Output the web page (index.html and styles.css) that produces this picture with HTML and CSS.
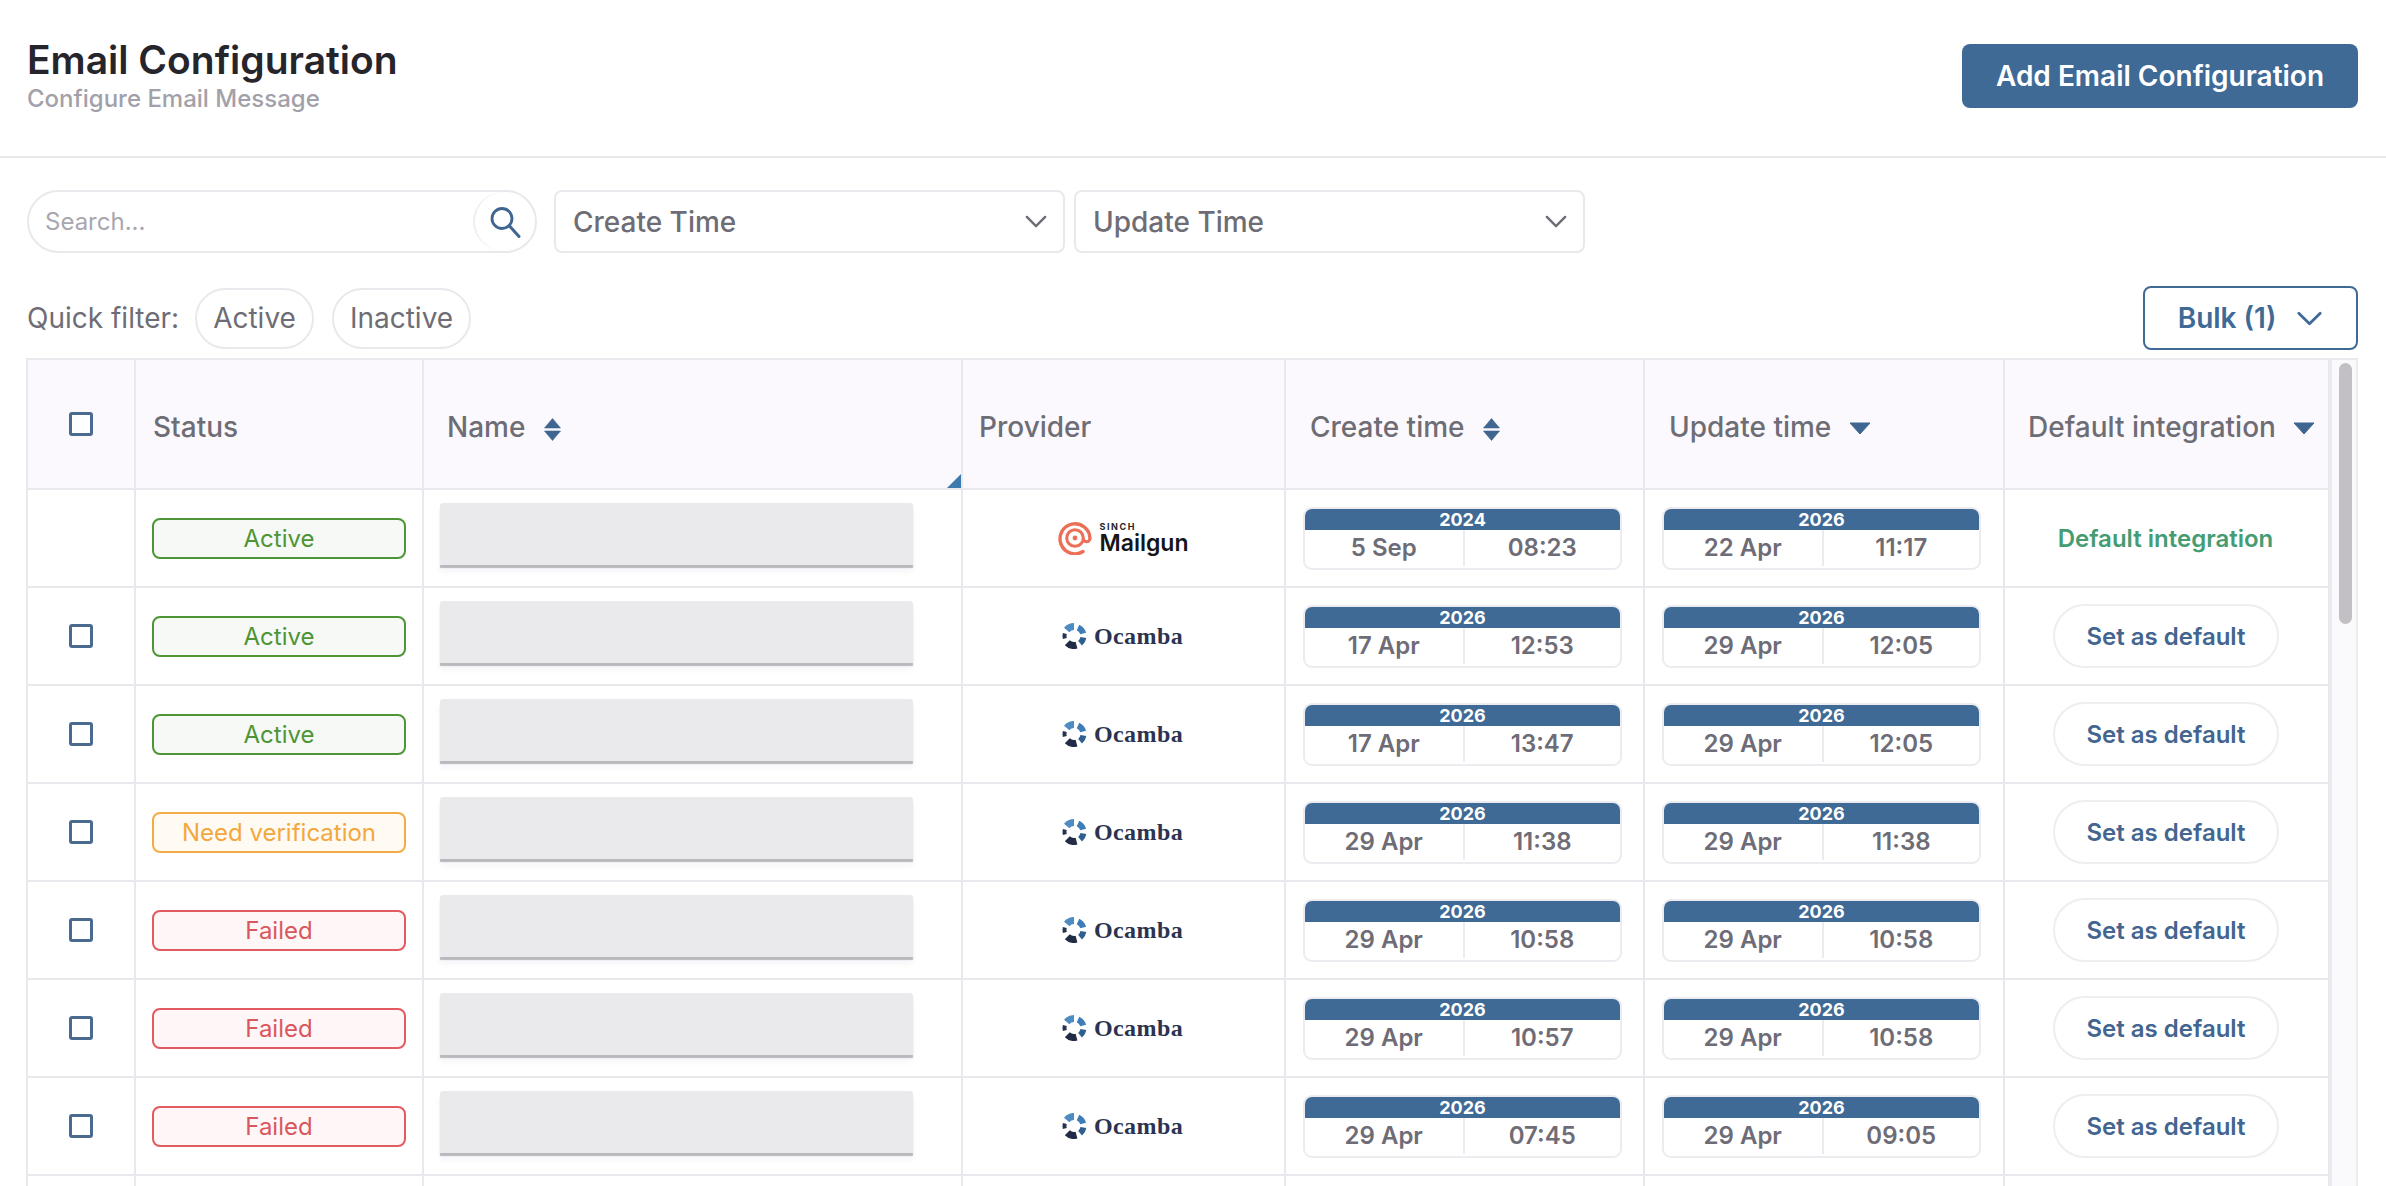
FILE: index.html
```html
<!DOCTYPE html>
<html lang="en">
<head>
    <meta charset="UTF-8">
    <title>Email Configuration</title>
    <link rel="stylesheet" href="styles.css">
</head>
<body>
    <!-- icons and logos used more than once -->
    <svg class="defs" width="0" height="0">
        <symbol id="i-sort" viewBox="0 0 17 23">
            <path d="M8.5 0.5 L16.5 10 H0.5 Z M0.5 13 H16.5 L8.5 22.5 Z" fill="currentColor" stroke="currentColor" stroke-width=".6" stroke-linejoin="round"/>
        </symbol>
        <symbol id="i-down" viewBox="0 0 22 13">
            <path d="M1 1 H21 L11 12 Z" fill="currentColor" stroke="currentColor" stroke-width="1" stroke-linejoin="round"/>
        </symbol>
        <symbol id="i-chev" viewBox="0 0 24 14">
            <path d="M2 2 L12 12 L22 2" fill="none" stroke="currentColor" stroke-width="2.6" stroke-linecap="round" stroke-linejoin="round"/>
        </symbol>
        <symbol id="i-ocamba" viewBox="0 0 26 26">
            <g fill="none">
                <path d="M5.7 6.9 A9.5 9.5 0 0 1 13 3.5" stroke="#4f8cc4" stroke-width="7"/>
                <path d="M17 4.4 A9.5 9.5 0 0 1 22.2 10.5" stroke="#3f7db8" stroke-width="6"/>
                <path d="M22.4 14.6 A9.5 9.5 0 0 1 19.1 20.3" stroke="#2f5f8e" stroke-width="6"/>
                <path d="M15.5 22.2 A9.5 9.5 0 0 1 6.3 19.7" stroke="#232c45" stroke-width="7"/>
                <path d="M3.8 15.5 A9.5 9.5 0 0 1 3.8 10.5" stroke="#27344f" stroke-width="4"/>
            </g>
        </symbol>
    </svg>

    <header class="page-head">
        <div class="head-text">
            <h1>Email Configuration</h1>
            <p>Configure Email Message</p>
        </div>
        <button class="btn-add">Add Email Configuration</button>
    </header>

    <div class="filters">
        <div class="search">
            <span class="search-ph">Search...</span>
            <span class="search-btn">
                <svg width="32" height="32" viewBox="0 0 32 32"><circle cx="13" cy="12.5" r="10" fill="none" stroke="#3f6591" stroke-width="2.8"/><path d="M20.5 20 L30 30.5" stroke="#3f6591" stroke-width="3" stroke-linecap="round"/></svg>
            </span>
        </div>
        <div class="select"><span>Create Time</span><svg class="sel-chev" width="22" height="13"><use href="#i-chev"/></svg></div>
        <div class="select"><span>Update Time</span><svg class="sel-chev" width="22" height="13"><use href="#i-chev"/></svg></div>
    </div>

    <div class="quick">
        <span class="quick-label">Quick filter:</span>
        <span class="pill">Active</span>
        <span class="pill">Inactive</span>
        <button class="btn-bulk">Bulk (1) <svg class="bulk-chev" width="27" height="15"><use href="#i-chev"/></svg></button>
    </div>

    <div class="table-wrap">
        <table class="grid">
            <colgroup>
                <col class="c-check"><col class="c-status"><col class="c-name"><col class="c-prov"><col class="c-time"><col class="c-time2"><col class="c-def">
            </colgroup>
            <thead>
                <tr>
                    <th class="cell-check"><span class="check up"></span></th>
                    <th class="th-status">Status</th>
                    <th class="th-name">Name <svg class="sort" width="17" height="23"><use href="#i-sort"/></svg><span class="resize"></span></th>
                    <th>Provider</th>
                    <th class="th-time">Create time <svg class="sort" width="17" height="23"><use href="#i-sort"/></svg></th>
                    <th class="th-time">Update time <svg class="tri" width="22" height="13"><use href="#i-down"/></svg></th>
                    <th class="th-def">Default integration <svg class="tri" width="22" height="13"><use href="#i-down"/></svg></th>
                </tr>
            </thead>
            <tbody>
                <tr>
                    <td></td>
                    <td><div class="badge ok">Active</div></td>
                    <td class="cell-name"><div class="blur"></div></td>
                    <td>
                        <div class="logo">
                            <svg width="34" height="34" viewBox="0 0 34 34" fill="none" stroke="#ec7058">
                                <path d="M32 17 A15 15 0 1 0 25 30.5" stroke-width="3.4" stroke-linecap="round"/>
                                <circle cx="17" cy="17" r="8.3" stroke-width="3"/>
                                <circle cx="17" cy="17" r="2.4" fill="#ec7058" stroke="none"/>
                                <path d="M25.3 17 C25.3 22 32 22 32 17" stroke-width="3"/>
                            </svg>
                            <div class="mg-text"><span class="mg-top">SINCH</span><span class="mg-name">Mailgun</span></div>
                        </div>
                    </td>
                    <td><div class="stamp"><div class="year">2024</div><div class="when"><span>5 Sep</span><span>08:23</span></div></div></td>
                    <td><div class="stamp"><div class="year">2026</div><div class="when"><span>22 Apr</span><span>11:17</span></div></div></td>
                    <td><div class="is-default">Default integration</div></td>
                </tr>
                <tr>
                    <td class="cell-check"><span class="check"></span></td>
                    <td><div class="badge ok">Active</div></td>
                    <td class="cell-name"><div class="blur"></div></td>
                    <td><div class="logo oc"><svg width="26" height="26"><use href="#i-ocamba"/></svg><span class="oc-name">Ocamba</span></div></td>
                    <td><div class="stamp"><div class="year">2026</div><div class="when"><span>17 Apr</span><span>12:53</span></div></div></td>
                    <td><div class="stamp"><div class="year">2026</div><div class="when"><span>29 Apr</span><span>12:05</span></div></div></td>
                    <td><button class="btn-default">Set as default</button></td>
                </tr>
                <tr>
                    <td class="cell-check"><span class="check"></span></td>
                    <td><div class="badge ok">Active</div></td>
                    <td class="cell-name"><div class="blur"></div></td>
                    <td><div class="logo oc"><svg width="26" height="26"><use href="#i-ocamba"/></svg><span class="oc-name">Ocamba</span></div></td>
                    <td><div class="stamp"><div class="year">2026</div><div class="when"><span>17 Apr</span><span>13:47</span></div></div></td>
                    <td><div class="stamp"><div class="year">2026</div><div class="when"><span>29 Apr</span><span>12:05</span></div></div></td>
                    <td><button class="btn-default">Set as default</button></td>
                </tr>
                <tr>
                    <td class="cell-check"><span class="check"></span></td>
                    <td><div class="badge warn">Need verification</div></td>
                    <td class="cell-name"><div class="blur"></div></td>
                    <td><div class="logo oc"><svg width="26" height="26"><use href="#i-ocamba"/></svg><span class="oc-name">Ocamba</span></div></td>
                    <td><div class="stamp"><div class="year">2026</div><div class="when"><span>29 Apr</span><span>11:38</span></div></div></td>
                    <td><div class="stamp"><div class="year">2026</div><div class="when"><span>29 Apr</span><span>11:38</span></div></div></td>
                    <td><button class="btn-default">Set as default</button></td>
                </tr>
                <tr>
                    <td class="cell-check"><span class="check"></span></td>
                    <td><div class="badge bad">Failed</div></td>
                    <td class="cell-name"><div class="blur"></div></td>
                    <td><div class="logo oc"><svg width="26" height="26"><use href="#i-ocamba"/></svg><span class="oc-name">Ocamba</span></div></td>
                    <td><div class="stamp"><div class="year">2026</div><div class="when"><span>29 Apr</span><span>10:58</span></div></div></td>
                    <td><div class="stamp"><div class="year">2026</div><div class="when"><span>29 Apr</span><span>10:58</span></div></div></td>
                    <td><button class="btn-default">Set as default</button></td>
                </tr>
                <tr>
                    <td class="cell-check"><span class="check"></span></td>
                    <td><div class="badge bad">Failed</div></td>
                    <td class="cell-name"><div class="blur"></div></td>
                    <td><div class="logo oc"><svg width="26" height="26"><use href="#i-ocamba"/></svg><span class="oc-name">Ocamba</span></div></td>
                    <td><div class="stamp"><div class="year">2026</div><div class="when"><span>29 Apr</span><span>10:57</span></div></div></td>
                    <td><div class="stamp"><div class="year">2026</div><div class="when"><span>29 Apr</span><span>10:58</span></div></div></td>
                    <td><button class="btn-default">Set as default</button></td>
                </tr>
                <tr>
                    <td class="cell-check"><span class="check"></span></td>
                    <td><div class="badge bad">Failed</div></td>
                    <td class="cell-name"><div class="blur"></div></td>
                    <td><div class="logo oc"><svg width="26" height="26"><use href="#i-ocamba"/></svg><span class="oc-name">Ocamba</span></div></td>
                    <td><div class="stamp"><div class="year">2026</div><div class="when"><span>29 Apr</span><span>07:45</span></div></div></td>
                    <td><div class="stamp"><div class="year">2026</div><div class="when"><span>29 Apr</span><span>09:05</span></div></div></td>
                    <td><button class="btn-default">Set as default</button></td>
                </tr>
                <tr>
                    <td></td><td></td><td></td><td></td><td></td><td></td><td></td>
                </tr>
            </tbody>
        </table>
        <div class="scroll"><div class="thumb"></div></div>
    </div>
</body>
</html>
```

FILE: styles.css
```css
*{
    box-sizing: border-box;
}

html, body{
    height: 1186px;
    overflow: hidden;
}

body{
    margin: 0;
    background: #fff;
    font-family: "Inter", "Liberation Sans", sans-serif;
    color: #6e6d75;
}

button{
    font-family: inherit;
}

.defs{
    position: absolute;
}

/* page head */
.page-head{
    display: flex;
    justify-content: space-between;
    align-items: flex-start;
    height: 158px;
    padding: 36px 28px 0 27px;
    border-bottom: 2px solid #e9e8ec;
}

.head-text h1{
    margin: 0;
    font-size: 39px;
    line-height: 48px;
    font-weight: 600;
    color: #26252b;
}

.head-text p{
    margin: 0;
    font-size: 24px;
    line-height: 30px;
    font-weight: 500;
    color: #a2a1a9;
}

.btn-add{
    width: 396px;
    height: 64px;
    margin-top: 8px;
    border: 0;
    border-radius: 8px;
    background: #406a96;
    color: #fff;
    font-size: 28px;
    font-weight: 600;
}

/* search and time selects */
.filters{
    display: flex;
    gap: 9px;
    margin: 32px 0 0 27px;
}

.search{
    display: flex;
    justify-content: space-between;
    align-items: center;
    width: 510px;
    height: 63px;
    margin-right: 8px;
    padding-left: 16px;
    border: 2px solid #e9e8ec;
    border-radius: 32px;
}

.search-ph{
    font-size: 24px;
    color: #a8a7ae;
}

.search-btn{
    display: flex;
    justify-content: center;
    align-items: center;
    width: 62px;
    height: 59px;
    border-left: 2px solid #eeedf0;
    border-radius: 50%;
}

.select{
    display: flex;
    justify-content: space-between;
    align-items: center;
    width: 511px;
    height: 63px;
    padding: 0 16px 0 17px;
    border: 2px solid #e9e8ec;
    border-radius: 8px;
    font-size: 28px;
    font-weight: 500;
}

.sel-chev{
    color: #6e6d75;
}

/* quick filter row */
.quick{
    display: flex;
    align-items: center;
    gap: 16px;
    height: 64px;
    margin: 33px 28px 0 27px;
}

.quick-label{
    font-size: 28px;
}

.pill{
    display: flex;
    align-items: center;
    height: 61px;
    padding: 0 16px;
    border: 2px solid #e9e8ec;
    border-radius: 31px;
    font-size: 28px;
}

.pill + .pill{
    margin-left: 2px;
}

.btn-bulk{
    display: flex;
    justify-content: center;
    align-items: center;
    gap: 20px;
    width: 215px;
    height: 64px;
    margin-left: auto;
    border: 2px solid #406a96;
    border-radius: 8px;
    background: #fff;
    color: #406a96;
    font-size: 28px;
    font-weight: 600;
}

.bulk-chev{
    stroke-width: 3;
}

/* table */
.table-wrap{
    display: flex;
    margin: 8px 28px 0 26px;
    height: 832px;
    overflow: hidden;
    border-top: 2px solid #e9e8ec;
}

.grid{
    width: 2302px;
    height: 10px;
    table-layout: fixed;
    border-collapse: collapse;
    flex: none;
    border-left: 2px solid #e9e8ec;
}

.c-check{ width: 108px; }
.c-status{ width: 288px; }
.c-name{ width: 539px; }
.c-prov{ width: 323px; }
.c-time{ width: 359px; }
.c-time2{ width: 360px; }
.c-def{ width: 325px; }

th, td{
    padding: 0;
    border: 2px solid #e9e8ec;
    border-top: 0;
    vertical-align: middle;
}

th{
    position: relative;
    height: 129px;
    padding: 5px 0 0 16px;
    background: #fbf9fd;
    text-align: left;
    font-size: 28px;
    font-weight: 500;
    color: #6e6d75;
}

td{
    height: 98px;
}

.th-status{
    padding-left: 17px;
}

.th-name{
    padding-left: 23px;
}

.th-time{
    padding-left: 24px;
}

.th-def{
    padding-left: 23px;
    white-space: nowrap;
}

th .sort{
    margin-left: 11px;
    vertical-align: -4px;
    color: #3f6591;
}

th .tri{
    margin-left: 10px;
    vertical-align: 2px;
    color: #3f6591;
}

.resize{
    position: absolute;
    right: 0;
    bottom: 0;
    border-left: 14px solid transparent;
    border-bottom: 14px solid #3d79ad;
}

.check{
    display: block;
    width: 24px;
    height: 24px;
    margin: 0 auto;
    border: 3px solid #4a6a90;
    border-radius: 3px;
    background: #fff;
}

th.cell-check{
    padding: 0 0 1px;
}

.badge{
    height: 41px;
    margin: 0 0 0 16px;
    width: 254px;
    border: 2px solid;
    border-radius: 8px;
    text-align: center;
    font-size: 24px;
    line-height: 37px;
}

.ok{
    border-color: #4d9535;
    background: #f6f9f5;
    color: #4d9535;
}

.warn{
    border-color: #f3ab47;
    background: #fffaf2;
    color: #f3a73f;
}

.bad{
    border-color: #e15b61;
    background: #fff6f7;
    color: #d9575d;
}

/* name is blanked out in the source */
.blur{
    width: 473px;
    height: 62px;
    margin: 0 0 8px 16px;
    background: #eae9ec;
    border-radius: 3px 3px 0 0;
    box-shadow: 0 3px 1px #b9b8bc, 0 7px 6px #f6f5f8;
}

.logo{
    display: flex;
    justify-content: center;
    align-items: center;
    gap: 7px;
}

.oc{
    padding-right: 3px;
}

.mg-text{
    display: flex;
    flex-direction: column;
    padding-top: 2px;
}

.mg-top{
    font-size: 9px;
    line-height: 8px;
    font-weight: 700;
    letter-spacing: 1.6px;
    color: #26252b;
}

.mg-name{
    font-size: 23px;
    line-height: 25px;
    font-weight: 600;
    color: #15151a;
}

.oc-name{
    font-family: "Liberation Serif", serif;
    font-size: 24px;
    font-weight: 700;
    letter-spacing: .4px;
    color: #2b3350;
}

/* date card */
.stamp{
    width: 319px;
    height: 63px;
    margin: 0 0 0 17px;
    border: 2px solid #ececf0;
    border-radius: 9px;
    overflow: hidden;
}

.year{
    height: 22px;
    margin: -1px -1px 0;
    background: #406a96;
    color: #fff;
    text-align: center;
    font-size: 18px;
    line-height: 24px;
    font-weight: 700;
}

.when{
    display: grid;
    grid-template-columns: 1fr 1fr;
    height: 36px;
}

.when span{
    text-align: center;
    font-size: 24px;
    line-height: 36px;
    font-weight: 600;
    color: #6e6c76;
}

.when span + span{
    border-left: 2px solid #ececf0;
}

.is-default{
    padding-right: 2px;
    text-align: center;
    font-size: 24px;
    font-weight: 600;
    color: #459c72;
}

.btn-default{
    display: block;
    width: 226px;
    height: 64px;
    margin: 0 0 0 48px;
    border: 2px solid #eeedf0;
    border-radius: 32px;
    background: #fff;
    color: #43658f;
    font-size: 24px;
    font-weight: 600;
}

/* scrollbar */
.scroll{
    flex: 1;
    padding: 3px 4px 0 7px;
    background: #faf9fc;
    border-left: 2px solid #ececf0;
    border-right: 2px solid #ececf0;
}

.thumb{
    height: 261px;
    border-radius: 8px;
    background: #c2c0c5;
}
```
